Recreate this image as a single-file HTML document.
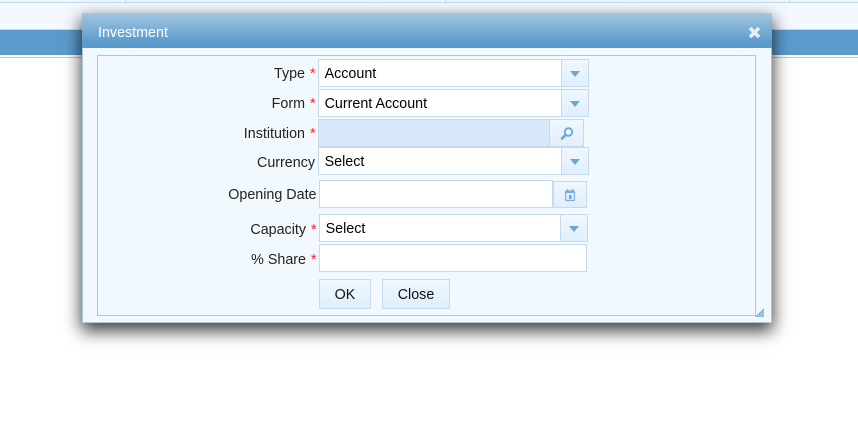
<!DOCTYPE html>
<html><head><meta charset="utf-8">
<style>
html,body{margin:0;padding:0;width:858px;height:427px;overflow:hidden;background:#fff;font-family:"Liberation Sans",sans-serif}
div{position:absolute;box-sizing:border-box}
.lb{font-size:14.3px;color:#222;text-align:right;line-height:16px;white-space:nowrap}
.st{color:#f22;font-size:14.3px;line-height:16px;white-space:nowrap}
.in{background:#fff;border:1px solid #c5dbec;font-size:14.3px;color:#000;line-height:28px;padding-left:5.6px;white-space:nowrap}
.bt{background:linear-gradient(#f0f7fe,#dfeffc);border:1px solid #c5dbec}
.ar{width:0;height:0;border-left:5px solid transparent;border-right:5px solid transparent;border-top:6px solid #6ba6d6}
.pb{background:linear-gradient(#f0f7fe,#dfeffc);border:1px solid #c5dbec;font-size:14.3px;color:#111;text-align:center;line-height:30px}
</style></head>
<body>
<div style="left:0;top:0;width:858px;height:3px;background:#eef6fd;border-bottom:1px solid #c5dbec"></div>
<div style="left:125px;top:0;width:1px;height:3px;background:#c5dbec"></div>
<div style="left:445px;top:0;width:1px;height:3px;background:#c5dbec"></div>
<div style="left:789px;top:0;width:1px;height:3px;background:#c5dbec"></div>
<div style="left:0;top:3px;width:858px;height:26px;background:#f3f9fe"></div>
<div style="left:0;top:29px;width:858px;height:1px;background:#d5d5d5"></div>
<div style="left:0;top:30px;width:858px;height:25px;background:#5b9bcb"></div>
<div style="left:0;top:57px;width:858px;height:1px;background:#b5cfe3"></div>

<div style="left:82px;top:13px;width:690px;height:310px;background:#f2f9fe;border:1px solid #a6c9e2;border-top:0;box-shadow:0 7px 16px 1px rgba(0,0,0,.75)"></div>
<div style="left:82px;top:13px;width:690px;height:35px;background:linear-gradient(#a3c6e0,#5a9acb 85%)"></div>
<div style="left:98px;top:25px;font-size:14.3px;line-height:16px;color:#fff">Investment</div>
<svg style="position:absolute;left:747px;top:25px" width="15" height="15" viewBox="0 0 15 15"><path d="M3 3L12 12M12 3L3 12" stroke="#e6eff7" stroke-width="3.6" fill="none"/></svg>

<div style="left:97px;top:55px;width:659px;height:261px;border:1px solid #a9c8dd"></div>

<div class="lb" style="left:200px;top:66px;width:105px">Type</div><div class="st" style="left:310px;top:66px">*</div>
<div class="in" style="left:318px;top:59px;width:244px;height:28px">Account</div>
<div class="bt" style="left:561px;top:59px;width:28px;height:28px"><div class="ar" style="left:8px;top:11px"></div></div>

<div class="lb" style="left:200px;top:96px;width:105px">Form</div><div class="st" style="left:310px;top:96px">*</div>
<div class="in" style="left:318px;top:89px;width:244px;height:28px">Current Account</div>
<div class="bt" style="left:561px;top:89px;width:28px;height:28px"><div class="ar" style="left:8px;top:11px"></div></div>

<div class="lb" style="left:200px;top:126px;width:105px">Institution</div><div class="st" style="left:310px;top:126px">*</div>
<div class="in" style="left:318px;top:119px;width:232px;height:28px;background:#d7e9f8"></div>
<div class="bt" style="left:549px;top:119px;width:35px;height:28px">
<svg style="position:absolute;left:9px;top:6px" width="16" height="16" viewBox="0 0 16 16"><circle cx="9.5" cy="6" r="3.8" fill="none" stroke="#6ba6d6" stroke-width="1.8"/><path d="M6.5 9L3 12.500" stroke="#6ba6d6" stroke-width="2.600" stroke-linecap="round"/></svg></div>

<div class="lb" style="left:200px;top:155px;width:115px">Currency</div>
<div class="in" style="left:318px;top:147px;width:244px;height:28px">Select</div>
<div class="bt" style="left:561px;top:147px;width:28px;height:28px"><div class="ar" style="left:8px;top:11px"></div></div>

<div class="lb" style="left:200px;top:187px;width:116.500px">Opening Date</div>
<div class="in" style="left:319px;top:180px;width:234px;height:28px"></div>
<div class="bt" style="left:553px;top:181px;width:34px;height:27px">
<svg style="position:absolute;left:9px;top:6px" width="14" height="15" viewBox="0 0 14 15"><rect x="2.500" y="3" width="9" height="9.500" rx="1" fill="#dcecf9" stroke="#7db1dc" stroke-width="1.200"/><path d="M2 4h10" stroke="#7db1dc" stroke-width="2"/><path d="M4.500 1v3M9.500 1v3" stroke="#7db1dc" stroke-width="1.400"/><rect x="6" y="7" width="2.500" height="4" fill="#6ba6d6"/></svg></div>

<div class="lb" style="left:200px;top:222px;width:106px">Capacity</div><div class="st" style="left:311px;top:222px">*</div>
<div class="in" style="left:319px;top:214px;width:242px;height:28px">Select</div>
<div class="bt" style="left:560px;top:214px;width:28px;height:28px"><div class="ar" style="left:8px;top:11px"></div></div>

<div class="lb" style="left:200px;top:252px;width:106px">% Share</div><div class="st" style="left:311px;top:252px">*</div>
<div class="in" style="left:319px;top:244px;width:268px;height:28px"></div>

<div class="pb" style="left:319px;top:279px;width:52px;height:30px">OK</div>
<div class="pb" style="left:382px;top:279px;width:68px;height:30px">Close</div>

<svg style="position:absolute;left:754px;top:307px" width="12" height="12" viewBox="0 0 12 12"><path d="M1 10L10 1V10Z" fill="#7fb3e0"/><path d="M4 10L10 4M7 10L10 7" stroke="#c5def3" stroke-width=".7"/></svg>
</body></html>
